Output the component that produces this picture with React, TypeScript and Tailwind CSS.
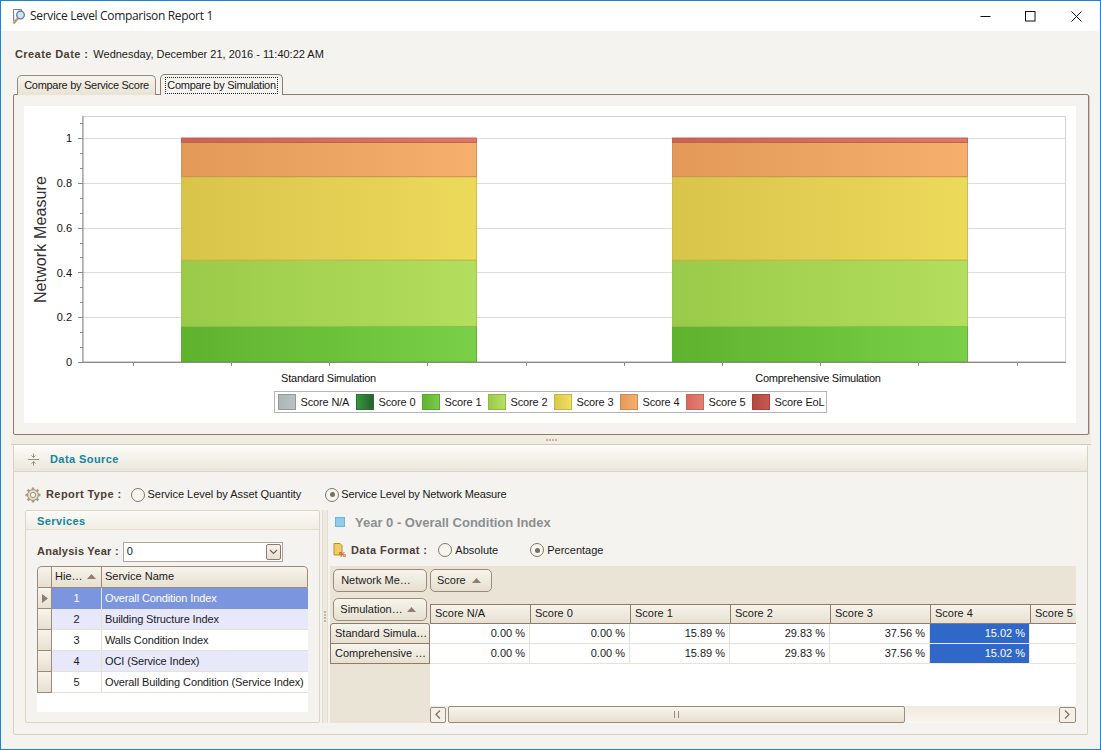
import React from "react";

const F = "font-['Liberation_Sans',Arial,sans-serif]";
const B = "font-bold tracking-[0.42px] text-[#4b4033]";

function Radio({ on }: { on?: boolean }) {
  return (
    <span className="flex h-[14px] w-[14px] shrink-0 items-center justify-center rounded-full border border-[#857668] bg-[#f7f5f0]">
      {on && <span className="h-[5px] w-[5px] rounded-full bg-[#7a6d62]" />}
    </span>
  );
}

function Arrow({ dir = "up" }: { dir?: "up" | "right" | "left" }) {
  if (dir === "up")
    return (
      <svg width="9" height="5" viewBox="0 0 9 5">
        <path d="M0 5 L4.5 0 L9 5Z" fill="#8d7f72" />
      </svg>
    );
  if (dir === "right")
    return (
      <svg width="6" height="9" viewBox="0 0 6 9">
        <path d="M0 0 L6 4.5 L0 9Z" fill="#8d7f72" />
      </svg>
    );
  return (
    <svg width="6" height="9" viewBox="0 0 6 9">
      <path d="M5 0.5 L1 4.5 L5 8.5" fill="none" stroke="#7d6d60" strokeWidth="1.2" />
    </svg>
  );
}

function Gear() {
  return (
    <svg width="16" height="16" viewBox="0 0 16 16">
      <g stroke="#a99c80" strokeWidth="2.4">
        <path d="M8 0.5V15.5M0.5 8H15.5M2.7 2.7L13.3 13.3M13.3 2.7L2.7 13.3" />
      </g>
      <circle cx="8" cy="8" r="5.4" fill="#e4dece" stroke="#a0937a" />
      <circle cx="8" cy="8" r="2.6" fill="#f5f3ef" stroke="#a0937a" />
    </svg>
  );
}

function Chart() {
  const bars = [181, 672];
  const segs = [
    { id: "s1", y: 326.4, h: 35.6, b: "#5ca82d" },
    { id: "s2", y: 260, h: 66.4, b: "#94bf48" },
    { id: "s3", y: 176.7, h: 83.3, b: "#c9b547" },
    { id: "s4", y: 142.3, h: 34.4, b: "#cd8a58" },
    { id: "s5", y: 138, h: 4.3, b: "#b85a4e" },
  ];
  const stops: Record<string, [string, string]> = {
    s1: ["#5fb22e", "#79d048"],
    s2: ["#9aca49", "#b4de5d"],
    s3: ["#d9c44a", "#ecda5b"],
    s4: ["#e39a59", "#f6af6c"],
    s5: ["#cb6455", "#e27869"],
  };
  const minor = Array.from({ length: 17 }, (_, i) => 362 - i * 14.93);
  const xt = Array.from({ length: 10 }, (_, i) => 132.7 + i * 98.2);
  return (
    <svg width="1052" height="285" viewBox="24 106 1052 285" className="block">
      <defs>
        {Object.entries(stops).map(([k, v]) => (
          <linearGradient id={k} key={k}>
            <stop offset="0" stopColor={v[0]} />
            <stop offset="1" stopColor={v[1]} />
          </linearGradient>
        ))}
      </defs>
      <rect x="82.5" y="116.5" width="983" height="245" fill="#fff" stroke="#d2d2d2" />
      {[0.2, 0.4, 0.6, 0.8, 1].map((v) => (
        <line key={v} x1="83" x2="1066" y1={Math.round(362 - v * 224) + 0.5} y2={Math.round(362 - v * 224) + 0.5} stroke="#dcdcdc" />
      ))}
      {bars.map((x) =>
        segs.map((s) => (
          <rect key={x + s.id} x={x + 0.5} y={s.y} width="295" height={s.h} fill={`url(#${s.id})`} stroke={s.b} strokeWidth="0.9" />
        ))
      )}
      <line x1="83" x2="83" y1="116" y2="363" stroke="#8a8a8a" />
      <line x1="83" x2="1066" y1="362.5" y2="362.5" stroke="#8a8a8a" />
      {minor.map((y, i) => (
        <line key={i} x1={i % 3 === 0 ? 78 : 80} x2="83" y1={Math.round(y) + 0.5} y2={Math.round(y) + 0.5} stroke="#8a8a8a" />
      ))}
      {xt.map((x) => (
        <line key={x} x1={Math.round(x) + 0.5} x2={Math.round(x) + 0.5} y1="362" y2="366" stroke="#8a8a8a" />
      ))}
      <g fontFamily="'Liberation Sans',Arial,sans-serif" fontSize="11" fill="#111">
        {[
          ["1", 138],
          ["0.8", 183],
          ["0.6", 228],
          ["0.4", 273],
          ["0.2", 317],
          ["0", 362],
        ].map(([t, y]) => (
          <text key={t} x="72" y={(y as number) + 4} textAnchor="end">
            {t}
          </text>
        ))}
        <text x="328.5" y="382" textAnchor="middle" letterSpacing="-0.22">Standard Simulation</text>
        <text x="818" y="382" textAnchor="middle" letterSpacing="-0.25">Comprehensive Simulation</text>
      </g>
      <text
        transform="translate(46 239.5) rotate(-90)"
        textAnchor="middle"
        fontFamily="'Liberation Sans',Arial,sans-serif"
        fontSize="16"
        letterSpacing="0.12"
        fill="#333"
      >
        Network Measure
      </text>
    </svg>
  );
}

const legend = [
  { t: "Score N/A", w: "w-[78px]", c: "from-[#b0b5b8] to-[#bcc1c3] border-[#93989b]" },
  { t: "Score 0", w: "w-[66px]", c: "from-[#2f9a3a] to-[#2a5f2c] border-[#2f6d30]" },
  { t: "Score 1", w: "w-[66px]", c: "from-[#62b330] to-[#7acb4c] border-[#5ca82d]" },
  { t: "Score 2", w: "w-[66px]", c: "from-[#9aca49] to-[#b8e066] border-[#8fb944]" },
  { t: "Score 3", w: "w-[66px]", c: "from-[#dcc74c] to-[#efdf63] border-[#c9b547]" },
  { t: "Score 4", w: "w-[66px]", c: "from-[#e39a59] to-[#f6af6c] border-[#cf8a54]" },
  { t: "Score 5", w: "w-[66px]", c: "from-[#d8695c] to-[#e57f72] border-[#c4675a]" },
  { t: "Score EoL", w: "", c: "from-[#b54742] to-[#c45a52] border-[#a8423e]" },
];

const services = [
  ["1", "Overall Condition Index"],
  ["2", "Building Structure Index"],
  ["3", "Walls Condition Index"],
  ["4", "OCI (Service Index)"],
  ["5", "Overall Building Condition (Service Index)"],
];

const cols = ["Score N/A", "Score 0", "Score 1", "Score 2", "Score 3", "Score 4", "Score 5"];
const vals = ["0.00 %", "0.00 %", "15.89 %", "29.83 %", "37.56 %", "15.02 %", ""];

const headGrad = "bg-gradient-to-b from-[#f7f4ec] to-[#e7e0d1]";
const btn = "flex h-[23px] items-center rounded-[5px] border border-[#9c8a7b] bg-gradient-to-b from-[#f7f4ec] to-[#e7e0d1]";

export default function App() {
  return (
    <div className={`${F} relative flex h-[750px] w-[1101px] flex-col overflow-hidden border border-[#1a84dc] bg-[#f5f3ef] text-[11px] leading-none text-[#1a1a1a]`}>
      {/* Title bar */}
      <div className="flex h-[30px] shrink-0 items-center bg-white">
        <svg width="16" height="17" viewBox="0 0 16 17" className="ml-[10px]">
          <path d="M2.5 1.5H10.5V4M2.5 1.5V13H5" fill="#dfe7f3" stroke="#6d85ab" />
          <circle cx="9.5" cy="7" r="3.8" fill="#cfe3f5" stroke="#5d7598" strokeWidth="1.3" />
          <path d="M7 10.2 L2.5 15.5" stroke="#c99a5b" strokeWidth="2.4" />
        </svg>
        <span className="ml-[3px] text-[12px] tracking-[-0.33px] text-[#222] font-['Open_Sans',sans-serif]">Service Level Comparison Report 1</span>
        <div className="ml-auto flex items-center">
          <svg width="11" height="11" viewBox="0 0 11 11" className="mr-[34px]"><path d="M0.5 5.5H10.5" stroke="#111" /></svg>
          <svg width="11" height="11" viewBox="0 0 11 11" className="mr-[35px]"><rect x="0.5" y="0.5" width="9.5" height="9.5" fill="none" stroke="#111" /></svg>
          <svg width="11" height="11" viewBox="0 0 11 11" className="mr-[18px]"><path d="M0.5 0.5L10.5 10.5M10.5 0.5L0.5 10.5" stroke="#111" /></svg>
        </div>
      </div>

      {/* Create date */}
      <div className="flex h-[43px] shrink-0 items-center pl-[14px] pt-[3px]">
        <span className={B}>Create Date :</span>
        <span className="ml-[5px]">Wednesday, December 21, 2016 - 11:40:22 AM</span>
      </div>

      {/* Tabs */}
      <div className="relative z-10 flex h-[21px] shrink-0 items-end pl-[16px] tracking-[-0.28px]">
        <div className="flex h-[20px] w-[139px] items-center justify-center rounded-t-[5px] border border-b-0 border-[#9c8a7b] bg-gradient-to-b from-[#f7f4ec] to-[#e9e3d5]">
          Compare by Service Score
        </div>
        <div className="ml-[4px] flex h-[21px] w-[123px] items-center justify-center rounded-t-[5px] border border-b-0 border-[#8f7a6b] bg-[#f5f3ef]">
          <span className="border border-dotted border-[#222] px-[1px] py-[2px]">Compare by Simulation</span>
        </div>
      </div>

      {/* Tab panel */}
      <div className="ml-[12px] -mt-px h-[341px] w-[1076px] shrink-0 rounded-[2px] border border-[#8f7a6b] pl-[10px] pt-[11px] shadow-[1px_1px_0_#cfc9bf]">
        <div className="flex w-[1052px] flex-col items-center bg-white pb-[10px]">
          <Chart />
          <div className="flex h-[22px] w-[553px] items-center border border-[#b5b5b5] bg-white pl-[3px] tracking-[-0.15px]">
            {legend.map((l) => (
              <div key={l.t} className={`flex items-center gap-[5px] ${l.w}`}>
                <span className={`h-[16px] w-[18px] border bg-gradient-to-r ${l.c}`} />
                <span className="whitespace-nowrap">{l.t}</span>
              </div>
            ))}
          </div>
        </div>
      </div>

      {/* Splitter */}
      <div className="ml-[10px] flex h-[10px] w-[1080px] shrink-0 items-center justify-center border-b border-[#d5cab8] bg-[#f1ece2]">
        <div className="flex gap-[1px]">
          {[0, 1, 2, 3].map((i) => (
            <span key={i} className="h-[2px] w-[2px] bg-[#c4b5a2]" />
          ))}
        </div>
      </div>

      {/* Data source */}
      <div className="ml-[12px] h-[290px] w-[1075px] shrink-0 rounded-[2px] border border-t-0 border-[#d8d0c0]">
        <div className="flex h-[27px] items-center border-b border-[#dcd4c5] bg-gradient-to-b from-[#fdfcfa] to-[#ece7dc] pl-[13px] pt-[3px]">
          <svg width="13" height="13" viewBox="0 0 13 13">
            <path d="M1 6.5H12" stroke="#9b8e7e" />
            <path d="M6.5 0.5V4M4.5 2.5L6.5 4.5L8.5 2.5M6.5 12.5V9M4.5 10.5L6.5 8.5L8.5 10.5" fill="none" stroke="#9b8e7e" />
          </svg>
          <span className="ml-[10px] font-bold tracking-[0.42px] text-[#12859f]">Data Source</span>
        </div>

        <div className="flex h-[38px] items-center pl-[11px] pt-[7px]">
          <Gear />
          <span className={`ml-[5px] ${B}`}>Report Type :</span>
          <span className="ml-[9px]"><Radio /></span>
          <span className="ml-[3px] tracking-[-0.03px]">Service Level by Asset Quantity</span>
          <span className="ml-[24px]"><Radio on /></span>
          <span className="ml-[2px] tracking-[-0.15px]">Service Level by Network Measure</span>
        </div>

        <div className="flex pl-[11px]">
          {/* Services */}
          <div className="h-[213px] w-[295px] shrink-0 rounded-[2px] border border-[#dcd4c5]">
            <div className="flex h-[19px] items-center border-b border-[#e3dccf] bg-gradient-to-b from-[#fbfaf7] to-[#f1ede4] pl-[11px] pt-[3px] font-bold tracking-[0.42px] text-[#12859f]">
              Services
            </div>
            <div className="flex h-[36px] items-center pl-[11px] pt-[7px]">
              <span className="font-bold tracking-[0.25px] text-[#4b4033]">Analysis Year :</span>
              <div className="ml-[4px] flex h-[20px] w-[160px] items-center justify-between border border-[#b0a596] bg-white pl-[3px] pr-[1px]">
                <span>0</span>
                <span className="flex h-[16px] w-[15px] items-center justify-center rounded-[2px] border border-[#8f7a6b] bg-gradient-to-b from-[#f7f4ec] to-[#e7e0d1]">
                  <svg width="9" height="6" viewBox="0 0 9 6"><path d="M1 1L4.5 4.5L8 1" fill="none" stroke="#6f6258" strokeWidth="1.2" /></svg>
                </span>
              </div>
            </div>
            <div className="ml-[11px] h-[146px] w-[271px] bg-white">
              <div className={`flex h-[22px] rounded-t-[4px] border border-b-[#9c8a7b] border-[#9c8a7b] pb-[2px] ${headGrad}`}>
                <div className="w-[14px] border-r border-[#9c8a7b] -mb-[2px]" />
                <div className="-mb-[2px] flex w-[50px] items-center justify-between border-r border-[#9c8a7b] pb-[2px] pl-[3px] pr-[5px]">
                  <span>Hie…</span>
                  <Arrow />
                </div>
                <div className="flex items-center pl-[3px]">Service Name</div>
              </div>
              {services.map(([n, name], i) => (
                <div
                  key={n}
                  className={`flex h-[21px] ${i === 0 ? "bg-[#7b96de] text-white" : i % 2 === 1 ? "bg-[#e8e8fb]" : "bg-white"}`}
                >
                  <div className={`flex w-[15px] shrink-0 items-center justify-center border-x border-b border-[#9c8a7b] ${headGrad}`}>
                    {i === 0 && <Arrow dir="right" />}
                  </div>
                  <div className={`flex w-[50px] shrink-0 items-center justify-center border-r ${i === 0 ? "border-[#dfe5f7]" : "border-[#e6e2d8] border-b"}`}>{n}</div>
                  <div className={`flex flex-1 items-center whitespace-nowrap pl-[3px] tracking-[-0.12px] ${i === 0 ? "" : "border-b border-[#e6e2d8]"}`}>{name}</div>
                </div>
              ))}
            </div>
          </div>

          {/* Vertical splitter */}
          <div className="flex h-[213px] w-[10px] shrink-0 items-center justify-center">
            <div className="flex h-full w-[6px] flex-col items-center justify-center gap-[1px] border-x border-[#e3dccf] bg-[#efeadf]">
              {[0, 1, 2, 3].map((i) => (
                <span key={i} className="h-[2px] w-[2px] bg-[#c4b5a2]" />
              ))}
            </div>
          </div>

          {/* Right */}
          <div className="w-[746px] shrink-0">
            <div className="flex h-[24px] items-center pl-[5px]">
              <span className="h-[10px] w-[10px] border border-[#6fb6d6] bg-[#8fcbea]" />
              <span className="ml-[10px] text-[13px] font-bold text-[#8b8f93]">Year 0 - Overall Condition Index</span>
            </div>
            <div className="flex h-[32px] items-center pl-[3px]">
              <svg width="13" height="14" viewBox="0 0 13 14">
                <path d="M1 0.5H7L9 2.5V12H1Z" fill="#f1cd63" stroke="#b78e2e" />
                <text x="6" y="13.5" fontSize="8" fontWeight="bold" fill="#c4521c" fontFamily="'Liberation Sans',sans-serif">%</text>
              </svg>
              <span className={`ml-[5px] ${B}`}>Data Format :</span>
              <span className="ml-[11px]"><Radio /></span>
              <span className="ml-[3px]">Absolute</span>
              <span className="ml-[32px]"><Radio on /></span>
              <span className="ml-[3px]">Percentage</span>
            </div>

            {/* Pivot */}
            <div className="flex h-[157px] bg-[#e9e4d6]">
              <div className="w-[100px] shrink-0">
                <div className={`ml-[3px] mt-[3px] w-[94px] justify-center pr-[8px] ${btn}`}>Network Me…</div>
                <div className={`ml-[3px] mt-[6px] w-[94px] justify-center gap-[4px] pr-[4px] ${btn}`}>
                  <span>Simulation…</span>
                  <Arrow />
                </div>
                <div className="mt-[2px] flex h-[21px] items-center rounded-t-[3px] border border-[#8f7a6b] bg-gradient-to-b from-[#f7f4ec] to-[#e7e0d1] pl-[4px]">Standard Simula…</div>
                <div className="-mt-px flex h-[21px] items-center border border-[#8f7a6b] bg-gradient-to-b from-[#f7f4ec] to-[#e7e0d1] pl-[4px]">Comprehensive …</div>
              </div>
              <div className="flex w-[646px] flex-col">
                <div className={`mt-[3px] w-[62px] gap-[6px] pl-[6px] ${btn}`}>
                  <span>Score</span>
                  <Arrow />
                </div>
                <div className={`mt-[12px] flex h-[20px] shrink-0 overflow-hidden border-y border-[#8f7a6b] ${headGrad}`}>
                  {cols.map((c) => (
                    <div key={c} className="flex h-full w-[100px] shrink-0 items-center border-l border-[#8f7a6b] pb-[1px] pl-[4px]">{c}</div>
                  ))}
                </div>
                <div className="flex-1 overflow-hidden bg-white">
                  {[0, 1].map((r) => (
                    <div key={r} className="flex h-[20px] w-[700px]">
                      {vals.map((v, i) => (
                        <div
                          key={i}
                          className={`flex w-[100px] shrink-0 items-center justify-end border-b border-r pr-[4px] ${i === 5 ? "border-[#e8edf8] bg-[#2f68c8] text-white" : "border-[#e6e2d8]"}`}
                        >
                          {v}
                        </div>
                      ))}
                    </div>
                  ))}
                </div>
                <div className="flex h-[17px] shrink-0 items-center bg-gradient-to-b from-[#efeae0] to-[#f8f6f1]">
                  <span className="flex h-[16px] w-[16px] items-center justify-center rounded-[2px] border border-[#9c8a7b] bg-[#f4f0e7]"><Arrow dir="left" /></span>
                  <span className={`ml-[2px] flex h-[17px] w-[457px] items-center justify-center rounded-[2px] border border-[#9c8a7b] ${headGrad}`}>
                    <span className="h-[7px] w-[5px] border-x border-[#9c8a7b]" />
                  </span>
                  <span className="ml-auto flex h-[16px] w-[17px] rotate-180 items-center justify-center rounded-[2px] border border-[#9c8a7b] bg-[#f4f0e7]"><Arrow dir="left" /></span>
                </div>
              </div>
            </div>
          </div>
        </div>
      </div>
    </div>
  );
}
